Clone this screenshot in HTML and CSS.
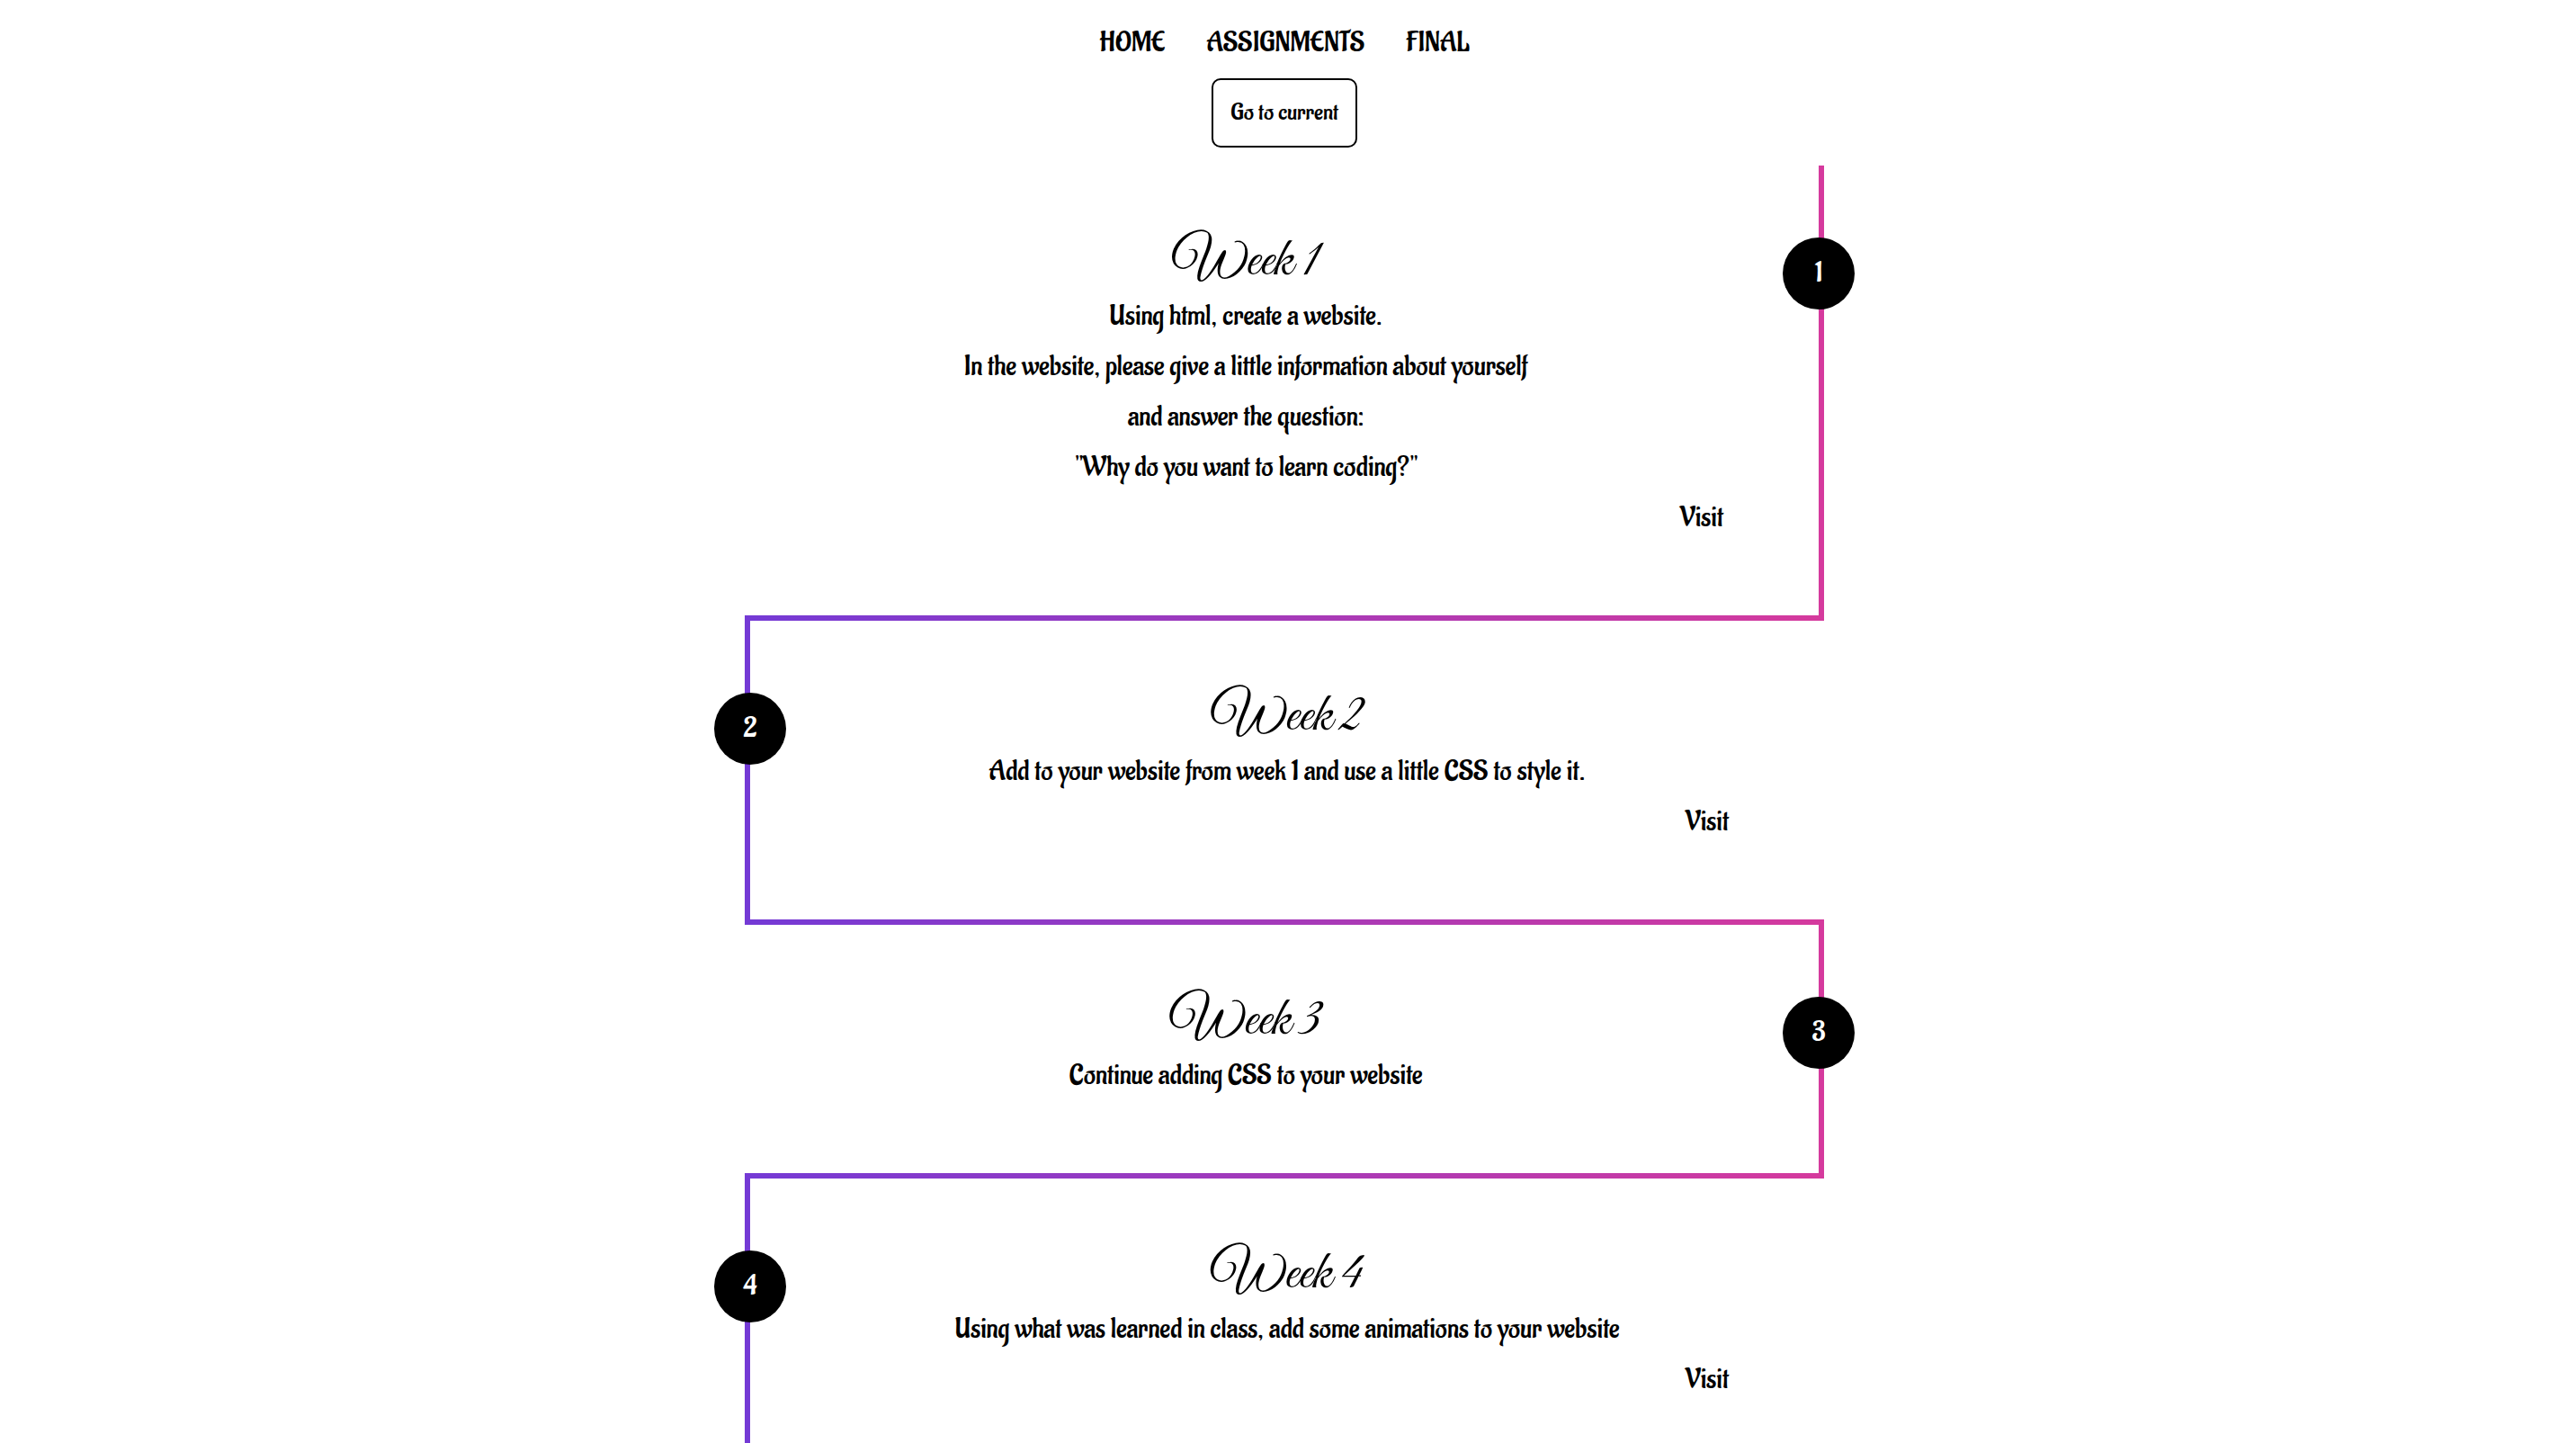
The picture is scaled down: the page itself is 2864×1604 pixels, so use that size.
FILE: index.html
```html
<!DOCTYPE html>
<html lang="en">
<head>
<meta charset="utf-8">
<meta name="viewport" content="width=device-width, initial-scale=1">
<title>Assignments</title>
<link rel="stylesheet" href="styles.css">
</head>
<body>
<header class="header">
  <nav class="nav">
    <a href="#home">HOME</a>
    <a href="#assignments">ASSIGNMENTS</a>
    <a href="#final">FINAL</a>
  </nav>
  <button class="jump" type="button">Go to current</button>
</header>
<main>
  <ol class="timeline" id="assignments">
    <li class="week">
      <h2>Week 1</h2>
      <p>Using html, create a website.</p>
      <p>In the website, please give a little information about yourself<br>and answer the question:</p>
      <p>"Why do you want to learn coding?"</p>
      <a class="visit" href="#week1">Visit</a>
    </li>
    <li class="week">
      <h2>Week 2</h2>
      <p>Add to your website from week 1 and use a little CSS to style it.</p>
      <a class="visit" href="#week2">Visit</a>
    </li>
    <li class="week">
      <h2>Week 3</h2>
      <p>Continue adding CSS to your website</p>
    </li>
    <li class="week">
      <h2>Week 4</h2>
      <p>Using what was learned in class, add some animations to your website</p>
      <a class="visit" href="#week4">Visit</a>
    </li>
  </ol>
</main>
</body>
</html>
```

FILE: styles.css
```css
* {
  box-sizing: border-box;
}

html {
  scrollbar-width: none;
}

body {
  margin: 0;
  padding-right: 8px;
  background: #fff;
  color: #000;
  font: 32px/56px "Aladin", "Liberation Serif", serif;
}

a {
  color: inherit;
  text-decoration: none;
}

.header {
  display: flex;
  flex-direction: column;
  align-items: center;
  padding: 20px 0;
}

.nav {
  display: flex;
  gap: 46px;
  margin-bottom: 11px;
}

.jump {
  padding: 0 19px;
  border: 2px solid #000;
  border-radius: 10px;
  background: #fff;
  color: #000;
  font: inherit;
  font-size: 27px;
  line-height: 73px;
}

.timeline {
  max-width: 1200px;
  margin: 0 auto;
  padding: 0;
  list-style: none;
  counter-reset: week;
}

.week {
  position: relative;
  display: flex;
  flex-direction: column;
  padding: 80px 96px;
  border: 0 solid;
  border-bottom-width: 6px;
  border-image: linear-gradient(to right, #743ad5 0%, #d53a9d 100%) 1;
  counter-increment: week;
  text-align: center;
}

.week:nth-child(odd) {
  padding-left: 16px;
  border-right-width: 6px;
}

.week:nth-child(even) {
  border-left-width: 6px;
}

.week::before {
  content: counter(week);
  position: absolute;
  top: 80px;
  width: 80px;
  border-radius: 50%;
  background: #000;
  color: #fff;
  line-height: 80px;
}

.week:nth-child(odd)::before {
  right: -40px;
}

.week:nth-child(even)::before {
  left: -40px;
}

.week h2 {
  margin: 0 0 4px;
  font: 60px/56px "Great Vibes", cursive;
}

.week p {
  margin: 0;
}

.visit {
  align-self: flex-end;
  margin-right: 10px;
}
```
